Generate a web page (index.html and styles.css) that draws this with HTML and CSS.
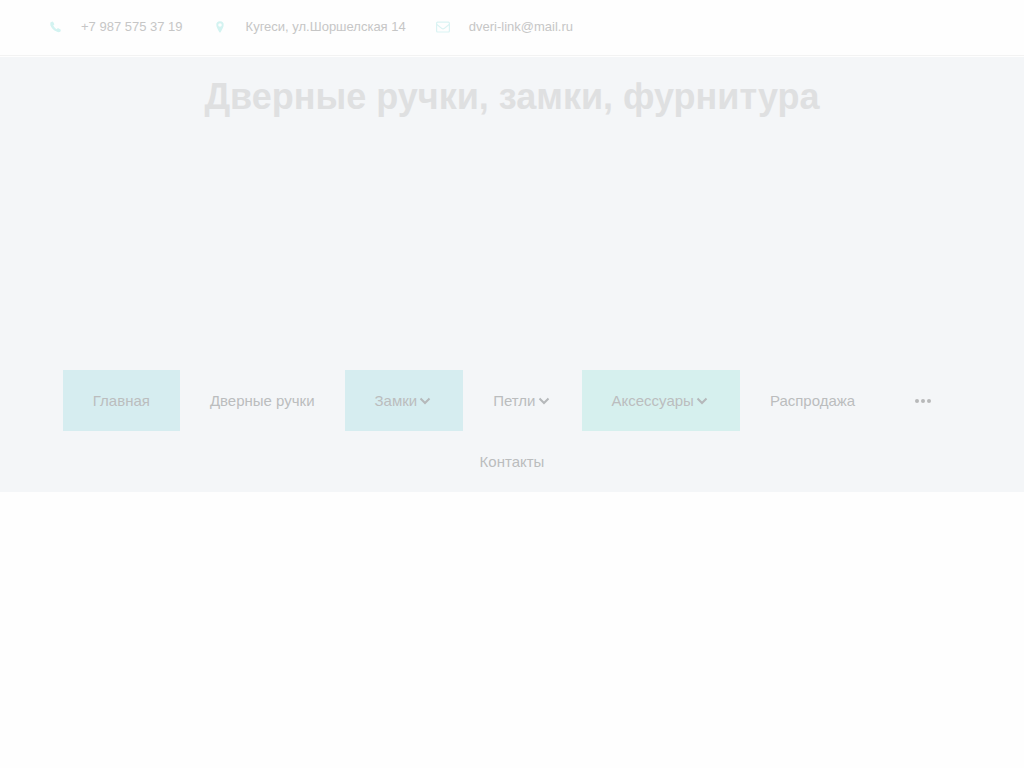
FILE: index.html
```html
<!DOCTYPE html>
<html lang="ru">
<head>
<meta charset="utf-8">
<title>Дверные ручки, замки, фурнитура</title>
<link rel="stylesheet" href="styles.css">
</head>
<body>
<header class="topbar">
  <a class="contact" href="tel:+79875753719">
    <svg class="icon" viewBox="-2 0 14 12" width="14" height="12"><path d="M.6 1.200 2.600 .4Q3.200 .4 4.400 3.300L3.200 4.600Q4.500 7 6.700 8.200L7.900 7.100Q10.900 8.400 10.900 9L10.300 10.800Q8.500 11.600 6.500 10.600 2 8.500.4 4.200 0 2.500 .6 1.200Z"/></svg>
    <span>+7 987 575 37 19</span>
  </a>
  <a class="contact" href="#map">
    <svg class="icon" viewBox="-3 0 14 12" width="14" height="12"><path fill-rule="evenodd" d="M4 .3a3.700 3.700 0 0 1 3.700 3.700C7.700 6 5.500 9.500 4.600 11.200q-.6.800-1.200 0C2.500 9.500.3 6 .3 4A3.700 3.700 0 0 1 4 .3ZM4 2.200a1.800 1.800 0 1 0 0 3.600 1.800 1.800 0 0 0 0-3.600Z"/></svg>
    <span>Кугеси, ул.Шоршелская 14</span>
  </a>
  <a class="contact" href="mailto:dveri-link@mail.ru">
    <svg class="icon icon-line" viewBox="0 0 14 12" width="14" height="12"><rect x=".6" y="1.200" width="12.800" height="9.800" rx="1"/><path d="M.8 3.500 6 7.600q1 .7 2 0l5.200-4.100"/></svg>
    <span>dveri-link@mail.ru</span>
  </a>
</header>
<section class="hero">
  <h1 class="title">Дверные ручки, замки, фурнитура</h1>
  <nav class="menu">
    <a class="item item-blue" href="#">Главная</a>
    <a class="item" href="#">Дверные ручки</a>
    <a class="item item-blue" href="#">Замки<svg class="chevron" viewBox="0 0 12 8" width="12" height="8"><path d="m1.500 1.500 4.500 4.500 4.500-4.500"/></svg></a>
    <a class="item" href="#">Петли<svg class="chevron" viewBox="0 0 12 8" width="12" height="8"><path d="m1.500 1.500 4.500 4.500 4.500-4.500"/></svg></a>
    <a class="item item-green" href="#">Аксессуары<svg class="chevron" viewBox="0 0 12 8" width="12" height="8"><path d="m1.500 1.500 4.500 4.500 4.500-4.500"/></svg></a>
    <a class="item" href="#">Распродажа</a>
    <button class="item more" type="button" aria-label="Ещё"><svg viewBox="0 0 16 4" width="16" height="4"><circle cx="2" cy="2" r="2"/><circle cx="8" cy="2" r="2"/><circle cx="14" cy="2" r="2"/></svg></button>
    <a class="item" href="#">Контакты</a>
  </nav>
</section>
</body>
</html>
```
FILE: styles.css
```css
body {
  margin: 0;
  background: #fefefe;
  font-family: "Liberation Sans", Arial, sans-serif;
}
.topbar {
  display: flex;
  gap: 30px;
  padding: 0 48px;
  height: 55px;
  border-bottom: 1px solid #f3f3f3;
  margin-bottom: 1px;
}
.contact {
  display: flex;
  align-items: center;
  gap: 19px;
  height: 53px;
  color: #c6c6c6;
  font-size: 13px;
  text-decoration: none;
}
.icon {
  fill: #d3f3f1;
}
.icon-line {
  fill: none;
  stroke: #daf3f3;
  stroke-width: 1.2;
}
.hero {
  background: #f4f6f8;
}
.title {
  box-sizing: border-box;
  margin: 0;
  padding-top: 19px;
  height: 313px;
  color: #dfe0e1;
  font-size: 36px;
  line-height: 42px;
  text-align: center;
}
.menu {
  display: flex;
  flex-wrap: wrap;
  justify-content: center;
  padding: 0 47px;
}
.item {
  display: flex;
  align-items: center;
  padding: 0 30px;
  height: 61px;
  color: #bbbdbe;
  font-size: 15px;
  text-decoration: none;
}
.item-blue {
  background: #d6edf0;
}
.item-green {
  background: #d6f0ee;
}
.chevron {
  margin: 0 2px;
  fill: none;
  stroke: #b5b8ba;
  stroke-width: 2;
}
.more {
  border: 0;
  background: none;
  fill: #b7b9ba;
}
```
